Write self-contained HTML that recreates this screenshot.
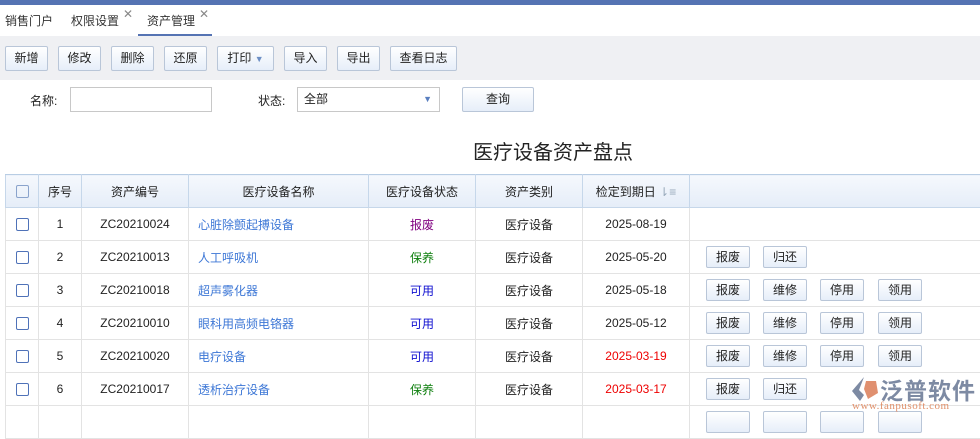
<!DOCTYPE html>
<html><head><meta charset="utf-8"><style>
*{margin:0;padding:0;box-sizing:border-box}
body{width:980px;height:417px;overflow:hidden;background:#fff;font-family:"Liberation Sans","Noto Sans CJK SC",sans-serif;font-size:12px;color:#222;position:relative}
.abs{position:absolute}
.topbar{left:0;top:0;width:980px;height:5px;background:#5573b3}
.tab{top:12px;font-size:12px;color:#333}
.x{top:7px;font-size:12px;color:#888}
.tb{left:0;top:36px;width:980px;height:44px;background:#eff0f3}
.btn{position:absolute;height:25px;border:1px solid #b9c6d8;border-radius:2px;background:linear-gradient(#fff,#e6eef9);font-size:12px;color:#222;text-align:center;line-height:23px}
.inp{border:1px solid #c8c8c8;background:#fff;height:25px}
table{position:absolute;left:5px;top:174px;border-collapse:collapse;table-layout:fixed}
td,th{border:1px solid #e3e3e3;height:33px;text-align:center;font-weight:normal;font-size:12px}
td:last-child,th:last-child{border-right:none}
th{background:linear-gradient(#f5f8fd,#e5edf8);border-color:#c6d7ea;border-top:1px solid #b8cde4}
.cb{display:inline-block;width:13px;height:13px;border:1px solid #4f72b8;border-radius:2px;vertical-align:middle}
th .cb{border-color:#8aa3cc}
.nm{text-align:left;padding-left:9px;color:#3d77d6}
.ops{text-align:left;position:relative}
.ob{position:absolute;top:5px;height:22px;width:44px;border:1px solid #b9c6d8;border-radius:2px;background:linear-gradient(#fff,#e6eef9);line-height:20px;text-align:center}
</style></head><body>
<div class="abs topbar"></div>
<div class="abs tab" style="left:5px">销售门户</div>
<div class="abs tab" style="left:71px">权限设置</div><div class="abs x" style="left:123px">✕</div>
<div class="abs tab" style="left:147px">资产管理</div><div class="abs x" style="left:199px">✕</div>
<div class="abs" style="left:138px;top:34px;width:74px;height:2px;background:#5573b3"></div>
<div class="abs tb"></div>
<div class="btn" style="left:5px;top:46px;width:43px">新增</div>
<div class="btn" style="left:58px;top:46px;width:43px">修改</div>
<div class="btn" style="left:111px;top:46px;width:43px">删除</div>
<div class="btn" style="left:164px;top:46px;width:43px">还原</div>
<div class="btn" style="left:217px;top:46px;width:57px">打印 <span style="color:#6d8fc5;font-size:9px">▼</span></div>
<div class="btn" style="left:284px;top:46px;width:43px">导入</div>
<div class="btn" style="left:337px;top:46px;width:43px">导出</div>
<div class="btn" style="left:390px;top:46px;width:67px">查看日志</div>
<div class="abs" style="left:30px;top:92px">名称:</div>
<div class="abs inp" style="left:70px;top:87px;width:142px"></div>
<div class="abs" style="left:258px;top:92px">状态:</div>
<div class="abs inp" style="left:297px;top:87px;width:143px;padding-left:6px;line-height:23px">全部<span style="position:absolute;right:7px;top:0;color:#5a7fc0;font-size:9px">▼</span></div>
<div class="btn" style="left:462px;top:87px;width:72px">查询</div>
<div class="abs" style="left:473px;top:136px;font-size:20px;color:#222">医疗设备资产盘点</div>
<table>
<colgroup><col style="width:33px"><col style="width:43px"><col style="width:107px"><col style="width:180px"><col style="width:107px"><col style="width:107px"><col style="width:107px"><col style="width:290px"></colgroup>
<tr><th><span class="cb"></span></th><th>序号</th><th>资产编号</th><th>医疗设备名称</th><th>医疗设备状态</th><th>资产类别</th><th>检定到期日 <span style="color:#9ab">⇂≡</span></th><th></th></tr>
<tr><td><span class="cb"></span></td><td>1</td><td>ZC20210024</td><td class="nm">心脏除颤起搏设备</td><td style="color:#800080">报废</td><td>医疗设备</td><td>2025-08-19</td><td class="ops"></td></tr>
<tr><td><span class="cb"></span></td><td>2</td><td>ZC20210013</td><td class="nm">人工呼吸机</td><td style="color:#108010">保养</td><td>医疗设备</td><td>2025-05-20</td><td class="ops"><div class="ob" style="left:16px">报废</div><div class="ob" style="left:73px">归还</div></td></tr>
<tr><td><span class="cb"></span></td><td>3</td><td>ZC20210018</td><td class="nm">超声雾化器</td><td style="color:#1010d0">可用</td><td>医疗设备</td><td>2025-05-18</td><td class="ops"><div class="ob" style="left:16px">报废</div><div class="ob" style="left:73px">维修</div><div class="ob" style="left:130px">停用</div><div class="ob" style="left:188px">领用</div></td></tr>
<tr><td><span class="cb"></span></td><td>4</td><td>ZC20210010</td><td class="nm">眼科用高频电铬器</td><td style="color:#1010d0">可用</td><td>医疗设备</td><td>2025-05-12</td><td class="ops"><div class="ob" style="left:16px">报废</div><div class="ob" style="left:73px">维修</div><div class="ob" style="left:130px">停用</div><div class="ob" style="left:188px">领用</div></td></tr>
<tr><td><span class="cb"></span></td><td>5</td><td>ZC20210020</td><td class="nm">电疗设备</td><td style="color:#1010d0">可用</td><td>医疗设备</td><td style="color:#e00">2025-03-19</td><td class="ops"><div class="ob" style="left:16px">报废</div><div class="ob" style="left:73px">维修</div><div class="ob" style="left:130px">停用</div><div class="ob" style="left:188px">领用</div></td></tr>
<tr><td><span class="cb"></span></td><td>6</td><td>ZC20210017</td><td class="nm">透析治疗设备</td><td style="color:#108010">保养</td><td>医疗设备</td><td style="color:#e00">2025-03-17</td><td class="ops"><div class="ob" style="left:16px">报废</div><div class="ob" style="left:73px">归还</div></td></tr>
<tr><td></td><td></td><td></td><td></td><td></td><td></td><td></td><td class="ops"><div class="ob" style="left:16px"></div><div class="ob" style="left:73px"></div><div class="ob" style="left:130px"></div><div class="ob" style="left:188px"></div></td></tr>
</table>
<svg class="abs" style="left:850px;top:375px" width="30" height="28" viewBox="0 0 30 28"><path d="M14 2 L2 16 L10 26 L14 20 L9 15 Z" fill="#7d8aa3"/><path d="M16 6 L26 6 L28 18 L18 24 L14 14 Z" fill="#e09070"/></svg>
<div class="abs" style="left:880px;top:372px;font-size:23px;color:#7d8aa3;font-weight:bold;letter-spacing:1px">泛普软件</div>
<div class="abs" style="left:852px;top:400px;font-size:11px;color:#e0906a;font-family:'Liberation Serif',serif;letter-spacing:0.5px">www.fanpusoft.com</div>
</body></html>
